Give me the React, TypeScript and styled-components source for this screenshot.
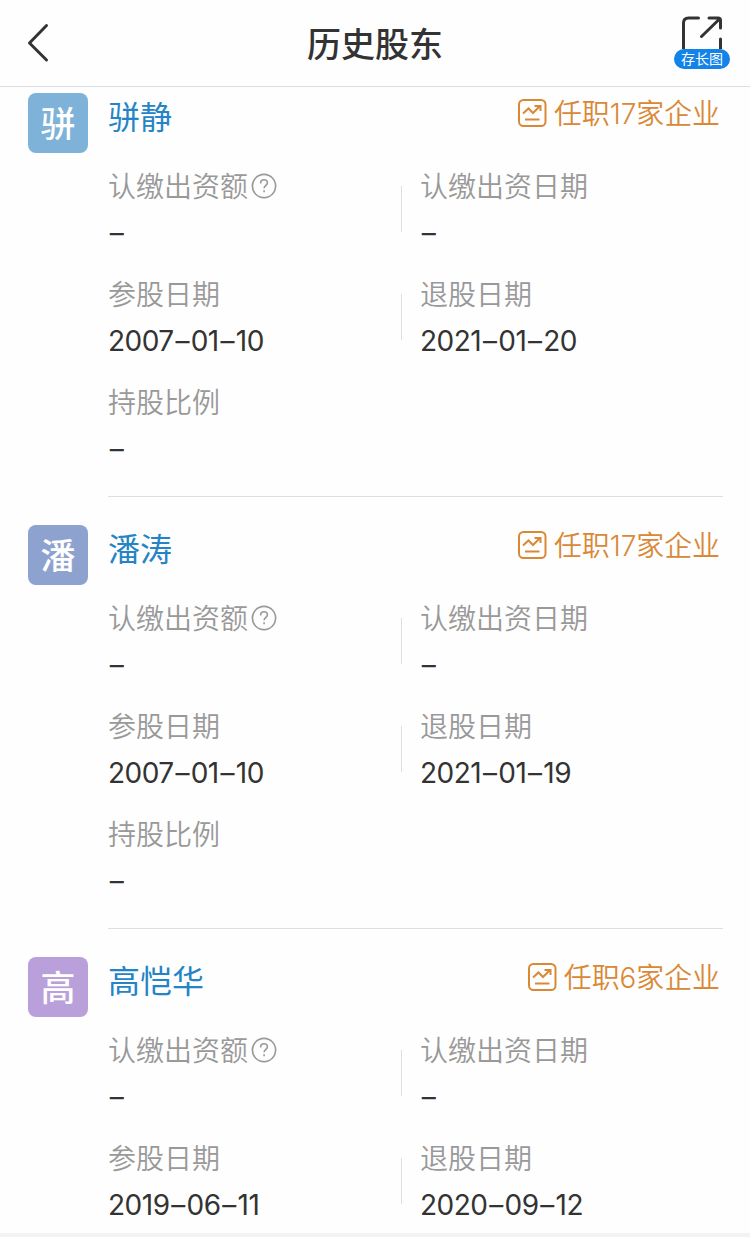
import React from 'react';
import styled, { createGlobalStyle } from 'styled-components';

const GlobalStyle = createGlobalStyle`
  * { box-sizing: border-box; }
  body { margin: 0; background: #fff; }
`;

const Page = styled.div`
  width: 750px;
  height: 1237px;
  overflow: hidden;
  display: flex;
  flex-direction: column;
  background: #fefefe;
  color: #333;
  font-family: Inter, 'Noto Sans CJK SC', sans-serif;
`;

const Header = styled.header`
  flex: none;
  height: 87px;
  padding: 0 20px 0 26px;
  display: grid;
  grid-template-columns: 60px 1fr 56px;
  align-items: center;
  border-bottom: 1px solid #dedede;
`;

const Title = styled.h1`
  margin: 3px 0 0 -10px;
  text-align: center;
  font-size: 34px;
  line-height: 40px;
  font-weight: 500;
`;

const BackIcon = styled.svg`
  display: block;
  width: 24px;
  height: 40px;
`;

const Share = styled.div`
  display: flex;
  flex-direction: column;
  align-items: center;
  height: 54px;
  margin-top: -2px;
`;

const ShareIcon = styled.svg`
  display: block;
  flex: none;
  width: 44px;
  height: 34px;
`;

const ShareLabel = styled.span`
  width: 56px;
  height: 20px;
  border-radius: 10px;
  background: #1283e8;
  color: #fff;
  font-size: 14px;
  line-height: 20px;
  text-align: center;
`;

const List = styled.main`
  flex: none;
  height: 1146px;
  overflow: hidden;
  padding-top: 6px;
`;

const Item = styled.article`
  display: grid;
  grid-template-columns: 60px 615px;
  column-gap: 20px;
  padding: 0 27px 28px 28px;
`;

const Avatar = styled.div<{ $tone: string }>`
  width: 60px;
  height: 60px;
  border-radius: 8px;
  background: ${(p) => p.$tone};
  color: #fff;
  font-size: 35px;
  line-height: 63px;
  font-weight: 500;
  text-align: center;
`;

const Body = styled.div`
  height: 404px;
  border-bottom: 1px solid #dedede;
`;

const ItemHead = styled.div`
  height: 79px;
  display: flex;
  justify-content: space-between;
  margin-right: 3px;
`;

const Name = styled.a`
  color: #2484c6;
  font-size: 32px;
  line-height: 49px;
`;

const Posts = styled.span`
  height: 40px;
  display: flex;
  align-items: center;
  gap: 7px;
  color: #d98836;
  font-size: 27.9px;
  line-height: 40px;
  font-weight: 350;
`;

const PostsText = styled.span`
  padding-top: 2px;
`;

const PostsIcon = styled.svg`
  width: 30px;
  height: 30px;
`;

const Rows = styled.div`
  display: flex;
  flex-direction: column;
  gap: 34px;
`;

const Row = styled.div`
  display: grid;
  grid-template-columns: 293px 1px 1fr;
  height: 74px;
`;

const Rule = styled.i`
  height: 46px;
  margin-top: 14px;
  background: #dedede;
`;

const Field = styled.div<{ $inset?: boolean }>`
  padding-left: ${(p) => (p.$inset ? 18 : 0)}px;
  display: flex;
  flex-direction: column;
  gap: 18px;
`;

const Label = styled.div`
  display: flex;
  align-items: flex-start;
  gap: 3px;
  height: 28px;
  color: #999;
  font-size: 28px;
  line-height: 30px;
  font-weight: 350;
`;

const HelpIcon = styled.svg`
  width: 26px;
  height: 26px;
  margin-top: 1px;
`;

const Value = styled.div`
  height: 28px;
  font-size: 28px;
  line-height: 30px;
  letter-spacing: -0.5px;
`;

const DashMark = styled.span`
  display: inline-block;
  width: 17px;
  text-align: center;
`;

type Holder = {
  initial: string;
  name: string;
  posts: number;
  tone: string;
  joined: string;
  left: string;
  ratio?: string;
};

const holders: Holder[] = [
  { initial: '骈', name: '骈静', posts: 17, tone: '#7eb2d8', joined: '2007–01–10', left: '2021–01–20', ratio: '–' },
  { initial: '潘', name: '潘涛', posts: 17, tone: '#8da2cf', joined: '2007–01–10', left: '2021–01–19', ratio: '–' },
  { initial: '高', name: '高恺华', posts: 6, tone: '#b9a0da', joined: '2019–06–11', left: '2020–09–12' },
];

function Info({ label, value, help, inset }: { label: string; value: string; help?: boolean; inset?: boolean }) {
  return (
    <Field $inset={inset}>
      <Label>
        {label}
        {help && (
          <HelpIcon viewBox="0 0 26 26" fill="none" stroke="#999" strokeWidth="1.6">
            <circle cx="13" cy="13" r="11.6" />
            <path d="M9.6 10.4c0-2.2 1.3-3.6 3.4-3.6s3.4 1.4 3.4 3.2c0 2.3-3.3 2.7-3.3 5.3M13.1 17.3v2" />
          </HelpIcon>
        )}
      </Label>
      <Value>
        {value.split(/(–)/).map((part, i) => (part === '–' ? <DashMark key={i}>–</DashMark> : part))}
      </Value>
    </Field>
  );
}

export default function App() {
  return (
    <Page>
      <GlobalStyle />
      <Header>
        <BackIcon viewBox="0 0 24 40" fill="none" stroke="#333" strokeWidth="3" strokeLinecap="round" strokeLinejoin="round">
          <path d="M20.5 2.5L3.5 20l17 17" />
        </BackIcon>
        <Title>历史股东</Title>
        <Share>
          <ShareIcon viewBox="0 0 44 34" fill="none" stroke="#333" strokeWidth="3" strokeLinecap="round" strokeLinejoin="round">
            <path d="M3.5 34V8q0-5 5-5h10M29 3h9q2.5 0 2.5 2.5V13M39.5 4L21.5 21.5M40.5 24v10" />
          </ShareIcon>
          <ShareLabel>存长图</ShareLabel>
        </Share>
      </Header>
      <List>
        {holders.map((h) => (
          <Item key={h.name}>
            <Avatar $tone={h.tone}>{h.initial}</Avatar>
            <Body>
              <ItemHead>
                <Name>{h.name}</Name>
                <Posts>
                  <PostsIcon viewBox="0 0 30 30" fill="none" stroke="#d98836" strokeWidth="2">
                    <rect x="2" y="2" width="26.5" height="26" rx="4.5" />
                    <path d="M6 15.5l5.5-5 4.5 4.5 7-7M17.5 8H23.5v5M8 21.5h14.500" />
                  </PostsIcon>
                  <PostsText>任职{h.posts}家企业</PostsText>
                </Posts>
              </ItemHead>
              <Rows>
                <Row>
                  <Info label="认缴出资额" value="–" help />
                  <Rule />
                  <Info label="认缴出资日期" value="–" inset />
                </Row>
                <Row>
                  <Info label="参股日期" value={h.joined} />
                  <Rule />
                  <Info label="退股日期" value={h.left} inset />
                </Row>
                {h.ratio && (
                  <Row>
                    <Info label="持股比例" value={h.ratio} />
                  </Row>
                )}
              </Rows>
            </Body>
          </Item>
        ))}
      </List>
      <BottomEdge />
    </Page>
  );
}

const BottomEdge = styled.footer`
  flex: 1;
  background: #f3f3f3;
`;
